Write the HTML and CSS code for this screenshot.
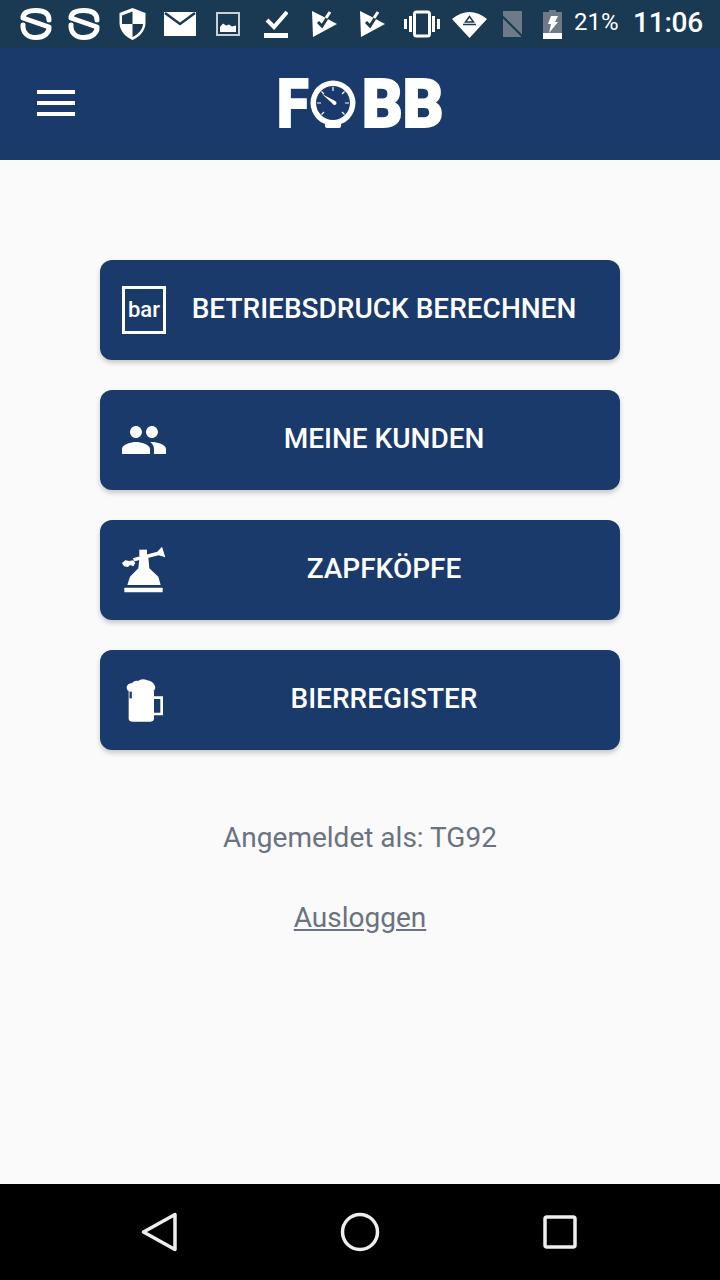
FILE: index.html
```html
<!DOCTYPE html>
<html lang="de">
<head>
    <meta charset="UTF-8">
    <meta name="viewport" content="width=device-width, initial-scale=1.0">
    <title>FOBB</title>
    <link rel="stylesheet" href="styles.css">
</head>
<body>
    <!-- Android status bar -->
    <div class="statusbar">
        <div class="slot"><svg width="32" height="32" viewBox="0 0 32 32"><path class="s-logo" d="M29 12 C29 5 24 2.500 16 2.500 C8 2.500 3 5 3 10 L29 19 C29.500 25 24 29.500 16 29.500 C8 29.500 2.500 25 3 17"/></svg></div>
        <div class="slot"><svg width="32" height="32" viewBox="0 0 32 32"><path class="s-logo" d="M29 12 C29 5 24 2.500 16 2.500 C8 2.500 3 5 3 10 L29 19 C29.500 25 24 29.500 16 29.500 C8 29.500 2.500 25 3 17"/></svg></div>
        <div class="slot"><svg width="27" height="32" viewBox="0 0 27 32"><path class="fill-w" d="M13.500 0 L26.500 5 V15 C26.500 23 20 29 13.500 32 C7 29 .5 23 .5 15 V5Z"/><path class="fill-d" d="M13.500 3.500 L3 7.500 V16 H13.500Z M13.500 16 H24 C23.500 22 19 26.500 13.500 29Z"/></svg></div>
        <div class="slot"><svg width="32" height="24" viewBox="0 0 32 24"><rect class="fill-w" width="32" height="24"/><path class="line-d" d="M1 1 L16 12 L31 1"/></svg></div>
        <div class="slot"><svg width="24" height="24" viewBox="0 0 24 24"><rect class="img-frame" x="1" y="1" width="22" height="22"/><path class="fill-w" d="M4 20 V15 L7 11.500 L10 13.500 L13 12.500 L16 14.500 L20 13.500 V20Z"/></svg></div>
        <div class="slot"><svg width="24" height="28" viewBox="0 0 24 28"><path class="line-w" d="M3 10 L10 17 L23 2"/><rect class="fill-w" y="23" width="24" height="5"/></svg></div>
        <div class="slot"><svg width="25" height="26" viewBox="0 0 25 26"><path class="fill-w" d="M0 0 L10 5 L25 13 L1 26Z"/><path class="check-d" d="M6 11 L10 15 L17 4"/><path class="check-w" d="M14 7 L18 1"/></svg></div>
        <div class="slot"><svg width="25" height="26" viewBox="0 0 25 26"><path class="fill-w" d="M0 0 L10 5 L25 13 L1 26Z"/><path class="check-d" d="M6 11 L10 15 L17 4"/><path class="check-w" d="M14 7 L18 1"/></svg></div>
        <svg class="vibrate" width="36" height="28" viewBox="0 0 36 28"><rect class="phone" x="10.500" y="2" width="15" height="24" rx="2"/><rect class="fill-w" y="9" width="3" height="10"/><rect class="fill-w" x="5" y="6" width="3" height="16"/><rect class="fill-w" x="28" y="6" width="3" height="16"/><rect class="fill-w" x="33" y="9" width="3" height="10"/></svg>
        <svg class="wifi" width="35" height="28" viewBox="0 0 35 28"><path class="fill-w" d="M0 9 Q17.500 -5 35 9 L17.500 28Z"/><path class="tri" d="M17.500 6.500 L13.500 12 H21.500Z"/><path class="line-thin" d="M11 14.500 H24"/></svg>
        <svg class="sim" width="25" height="28" viewBox="0 0 25 28"><path class="fill-g" d="M4 1 H23 V27 H4Z"/><path class="line-d2" d="M0 3 L25 28"/></svg>
        <svg class="battery" width="19" height="29" viewBox="0 0 19 29"><path class="fill-g" d="M6 0 H13 V2 H19 V23 H0 V2 H6Z"/><rect class="fill-w" y="23" width="19" height="6"/><path class="fill-w" d="M8 6 H15 L12 12 H15 L6 23 L8 14 H5Z"/></svg>
        <span class="battery-text">21%</span>
        <span class="clock">11:06</span>
    </div>

    <!-- Kopfzeile mit Logo -->
    <header class="topbar">
        <div class="menu-icon"><span></span><span></span><span></span></div>
        <div class="logo">
            <span class="logo-f">F</span>
            <svg class="gauge" width="46" height="48" viewBox="0 0 46 48">
                <rect class="fill-w" x="15" y="34" width="16" height="14" rx="2"/>
                <circle class="fill-w" cx="23" cy="23" r="22.500"/>
                <circle class="gauge-face" cx="23" cy="23" r="17"/>
                <path class="gauge-ticks" d="M23 7 V11 M7 23 H11 M35 23 H39 M11.500 11.500 L14 14 M34.500 11.500 L32 14 M11.500 34.500 L14 32 M34.500 34.500 L32 32"/>
                <path class="fill-w" d="M12 14 L25 21 L23 24Z"/>
                <circle class="fill-w" cx="24.500" cy="23" r="2"/>
            </svg>
            <span class="logo-b">BB</span>
        </div>
    </header>

    <main class="content">
        <a class="menu-btn">
            <div class="btn-icon"><div class="bar-badge">bar</div></div>
            <span class="btn-label">BETRIEBSDRUCK BERECHNEN</span>
        </a>
        <a class="menu-btn">
            <div class="btn-icon"><svg width="48" height="48" viewBox="0 0 24 24"><path class="fill-w" d="M16 11c1.660 0 2.990-1.340 2.990-3S17.660 5 16 5c-1.660 0-3 1.340-3 3s1.340 3 3 3zm-8 0c1.660 0 2.990-1.340 2.990-3S9.660 5 8 5C6.340 5 5 6.340 5 8s1.340 3 3 3zm0 2c-2.330 0-7 1.170-7 3.500V19h14v-2.500c0-2.330-4.670-3.500-7-3.500zm8 0c-.29 0-.62.02-.97.05 1.160.84 1.970 1.970 1.970 3.450V19h6v-2.500c0-2.330-4.670-3.500-7-3.500z"/></svg></div>
            <span class="btn-label">MEINE KUNDEN</span>
        </a>
        <a class="menu-btn">
            <div class="btn-icon"><svg width="48" height="48" viewBox="30 33 144 144">
                <rect class="fill-w" x="43" y="158" width="115" height="14" rx="2"/>
                <path class="fill-w" d="M52 150 L60 125 L85 100 L88 72 L115 66 L118 100 L145 125 L152 150Z"/>
                <rect class="fill-w" x="88" y="44" width="23" height="20"/>
                <path class="fill-w" d="M68 70 L142 50 L156 35 L166 67 L146 61 L74 79Z"/>
                <path class="fill-w" d="M36 84 L46 76 L58 78 L70 76 L76 84 L70 94 L60 90 L54 96 L42 94Z"/>
            </svg></div>
            <span class="btn-label">ZAPFKÖPFE</span>
        </a>
        <a class="menu-btn">
            <div class="btn-icon"><svg width="48" height="48" viewBox="30 33 144 144">
                <path class="fill-w" d="M56 78 H132 V160 Q132 170 122 170 H66 Q56 170 56 160Z"/>
                <path class="beer-handle" d="M132 98 H155 V147 H132"/>
                <path class="fill-w" d="M50 66 Q52 56 66 54 Q74 46 84 48 Q96 38 112 46 Q130 48 136 66 Q136 78 124 80 H70 L68 100 H60 V80 Q50 78 50 66Z"/>
                <path class="foam-gap" d="M62 80 V100"/>
            </svg></div>
            <span class="btn-label">BIERREGISTER</span>
        </a>

        <p class="user-line">Angemeldet als: TG92</p>
        <a class="logout">Ausloggen</a>
    </main>

    <!-- Android Navigationsleiste -->
    <nav class="navbar">
        <div class="nav-slot"><svg width="40" height="40" viewBox="0 0 40 40"><path class="nav-line" d="M3.500 20 L35 2.500 V37.500Z"/></svg></div>
        <div class="nav-slot"><svg width="40" height="40" viewBox="0 0 40 40"><circle class="nav-line" cx="20" cy="20" r="17.500"/></svg></div>
        <div class="nav-slot"><svg width="40" height="40" viewBox="0 0 40 40"><rect class="nav-line" x="5" y="5" width="30" height="30" rx="2"/></svg></div>
    </nav>
</body>
</html>
```

FILE: styles.css
```css
/* styles.css */
* {
    box-sizing: border-box;
}

body {
    font-family: Roboto, "Liberation Sans", sans-serif;
    background-color: #fafafa;
    display: flex;
    flex-direction: column;
    width: 720px;
    height: 1280px;
    margin: 0;
    overflow: hidden;
}

svg {
    display: block;
    flex-shrink: 0;
}

/* status bar */
.statusbar {
    height: 48px;
    background-color: #1a3a53;
    display: flex;
    align-items: center;
    padding-left: 12px;
    color: #fff;
}

.slot {
    width: 48px;
    display: flex;
    justify-content: center;
}

.vibrate { margin-left: 8px; }
.wifi { margin-left: 12px; }
.sim { margin-left: 12px; }
.battery { margin-left: 19px; }

.battery-text {
    margin-left: 12px;
    font-size: 24px;
    width: 43px;
    margin-top: -4px;
}

.clock {
    margin-left: 16px;
    font-size: 28px;
    font-weight: 500;
    letter-spacing: -0.2px;
    margin-top: -4px;
}

.fill-w { fill: #fff; }
.fill-d { fill: #1a3a53; }
.fill-g { fill: #6e7a88; }

.s-logo {
    fill: none;
    stroke: #fff;
    stroke-width: 5;
    stroke-linecap: round;
    stroke-linejoin: round;
}

.line-d {
    fill: none;
    stroke: #1a3a53;
    stroke-width: 2.500;
}

.line-w {
    fill: none;
    stroke: #fff;
    stroke-width: 4;
}

.img-frame {
    fill: none;
    stroke: #c9d0d6;
    stroke-width: 2;
}

.check-d {
    fill: none;
    stroke: #1a3a53;
    stroke-width: 3;
}

.check-w {
    fill: none;
    stroke: #fff;
    stroke-width: 3;
}

.phone {
    fill: none;
    stroke: #fff;
    stroke-width: 3;
}

.tri {
    fill: none;
    stroke: #1a3a53;
    stroke-width: 1.500;
}

.line-thin {
    fill: none;
    stroke: #1a3a53;
    stroke-width: 1.500;
}

.line-d2 {
    fill: none;
    stroke: #1a3a53;
    stroke-width: 2;
}

/* header */
.topbar {
    height: 112px;
    background-color: #193a6a;
    position: relative;
    display: flex;
    justify-content: center;
    align-items: center;
}

.menu-icon {
    position: absolute;
    left: 37px;
    top: 42px;
    width: 38px;
    display: flex;
    flex-direction: column;
    gap: 7px;
}

.menu-icon span {
    height: 4px;
    background-color: #fff;
}

.logo {
    display: flex;
    align-items: flex-start;
    width: 164px;
    height: 48px;
    color: #fff;
    font-weight: 900;
    font-size: 67px;
    line-height: 48px;
    -webkit-text-stroke: 2px #fff;
}

.logo-f {
    width: 33px;
    margin-left: -1px;
    transform: scaleX(0.86);
    transform-origin: left;
}

.logo-b {
    margin-left: 6px;
    width: 80px;
    transform: scaleX(0.94);
    transform-origin: left;
}

.gauge-face {
    fill: #193a6a;
}

.gauge-ticks {
    fill: none;
    stroke: #fff;
    stroke-width: 1.200;
}

/* main */
.content {
    flex: 1;
    padding-top: 100px;
    display: flex;
    flex-direction: column;
    align-items: center;
    gap: 30px;
}

.menu-btn {
    width: 520px;
    height: 100px;
    background-color: #193a6a;
    border-radius: 12px;
    box-shadow: 0 3px 5px rgba(0, 0, 0, 0.2);
    display: flex;
    align-items: center;
    padding: 0 20px;
    color: #fff;
}

.btn-icon {
    width: 48px;
    height: 48px;
    display: flex;
    justify-content: center;
}

.bar-badge {
    width: 44px;
    height: 48px;
    border: 3px solid #fff;
    display: flex;
    justify-content: center;
    align-items: center;
    font-size: 22px;
    font-weight: 500;
    padding-bottom: 2px;
}

.btn-label {
    flex: 1;
    text-align: center;
    font-size: 28px;
    font-weight: 500;
    margin-top: -4px;
}

.beer-handle {
    fill: none;
    stroke: #fff;
    stroke-width: 8;
}

.foam-gap {
    fill: none;
    stroke: #193a6a;
    stroke-width: 7;
}

.user-line {
    margin: 38px 0 0;
    font-size: 28px;
    line-height: 40px;
    color: #6b7280;
}

.logout {
    margin-top: 10px;
    font-size: 28px;
    line-height: 40px;
    color: #6b7280;
    text-decoration: underline;
}

/* nav */
.navbar {
    height: 96px;
    background-color: #000;
    display: flex;
    justify-content: center;
    align-items: center;
}

.nav-slot {
    width: 200px;
    display: flex;
    justify-content: center;
}

.nav-line {
    fill: none;
    stroke: #eeeeee;
    stroke-width: 3.500;
    stroke-linejoin: round;
}
```
